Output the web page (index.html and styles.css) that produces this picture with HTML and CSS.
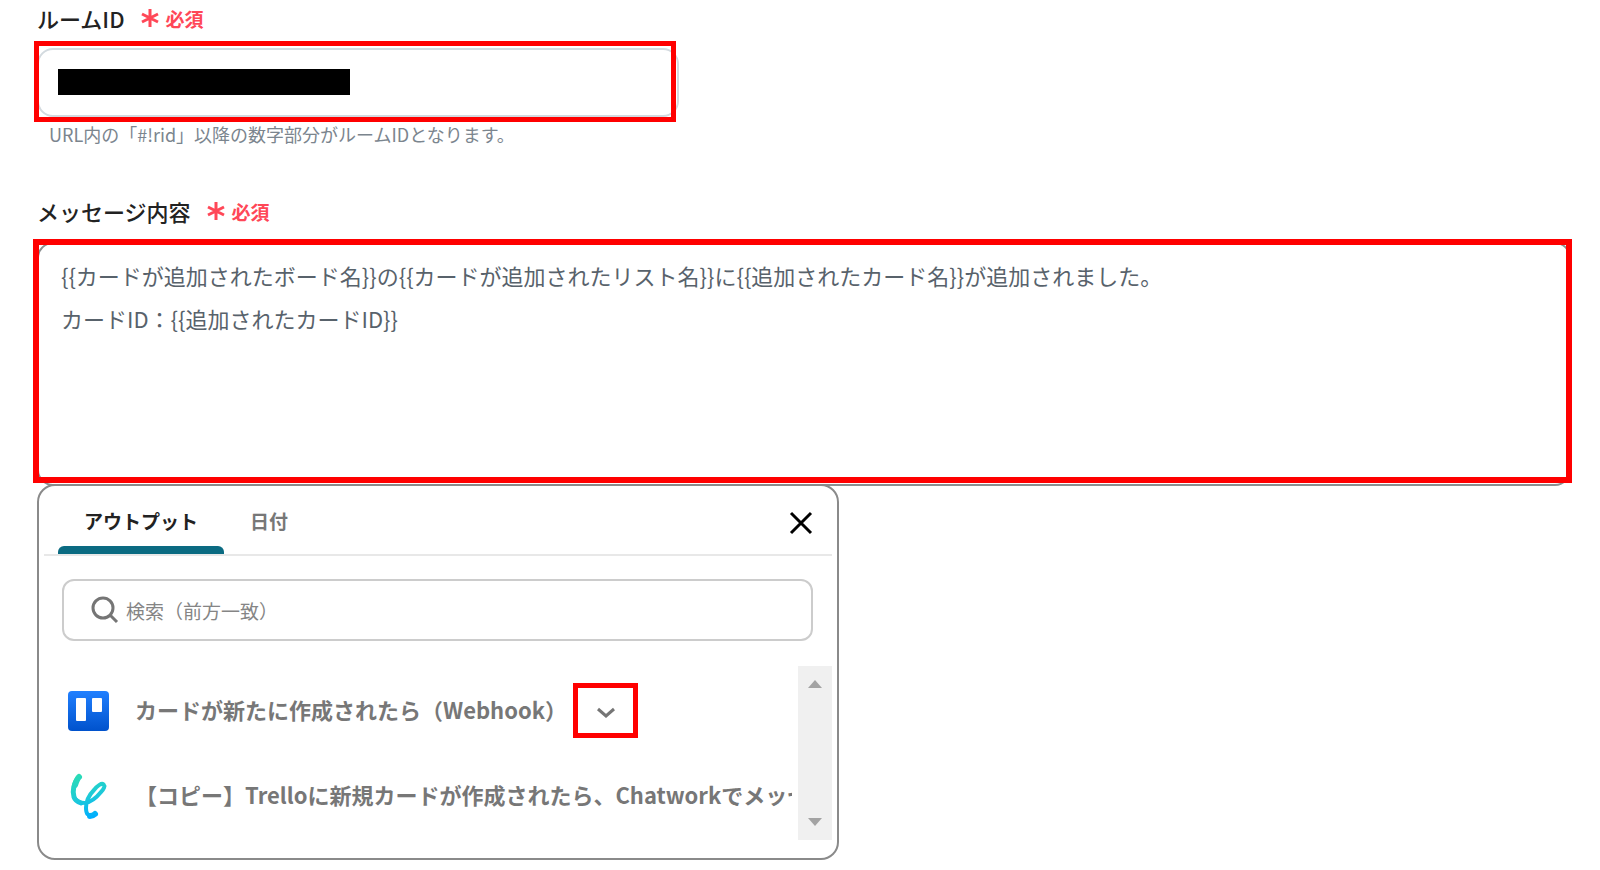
FILE: index.html
```html
<!DOCTYPE html>
<html lang="ja">
<head>
  <meta charset="UTF-8" />
  <meta name="viewport" content="width=device-width, initial-scale=1.0"/>
  <title>Chatwork - メッセージを送る</title>
  <link rel="stylesheet" href="styles.css">
</head>
<body>

  <form class="form">
    <div class="field">
      <div class="field-head">
        <label for="room-id">ルームID</label>
        <span class="required">
          <svg class="star" viewBox="0 0 18 18"><path d="M9 0v18M1 5l16 8M1 13l16-8"/></svg>
          必須
        </span>
      </div>
      <div class="input-box">
        <input type="text" id="room-id">
        <span class="redacted"></span>
        <span class="highlight"></span>
      </div>
      <p class="hint">URL内の「#!rid」以降の数字部分がルームIDとなります。</p>
    </div>

    <div class="field">
      <div class="field-head">
        <label for="message">メッセージ内容</label>
        <span class="required">
          <svg class="star" viewBox="0 0 18 18"><path d="M9 0v18M1 5l16 8M1 13l16-8"/></svg>
          必須
        </span>
      </div>
      <div class="message-box">
        <textarea id="message">{{カードが追加されたボード名}}の{{カードが追加されたリスト名}}に{{追加されたカード名}}が追加されました。
カードID：{{追加されたカードID}}</textarea>
        <span class="highlight"></span>
      </div>

      <div class="panel">
        <div class="tabs">
          <button type="button" class="tab active">アウトプット</button>
          <button type="button" class="tab">日付</button>
          <button type="button" class="close" aria-label="閉じる">
            <svg viewBox="0 0 24 24"><path d="M2 2l20 20M22 2L2 22"/></svg>
          </button>
        </div>

        <div class="search">
          <svg viewBox="0 0 28 28"><circle cx="12" cy="12" r="10"/><path d="M19 19l7 7"/></svg>
          <input type="text" placeholder="検索（前方一致）" aria-label="検索（前方一致）">
        </div>

        <div class="list-area">
          <ul class="list">
            <li>
              <svg class="app-icon" viewBox="0 0 44 48">
                <defs>
                  <linearGradient id="blue" x1="0" y1="0" x2="0" y2="1">
                    <stop offset="0" stop-color="#2180ff"/>
                    <stop offset="1" stop-color="#0052cc"/>
                  </linearGradient>
                </defs>
                <rect x="2" y="4" width="41" height="40" rx="4" fill="url(#blue)"/>
                <rect x="10" y="11" width="10" height="23" rx="1" fill="#fff"/>
                <rect x="26" y="11" width="10" height="14" rx="1" fill="#fff"/>
              </svg>
              <span class="item-name">カードが新たに作成されたら（Webhook）</span>
              <button type="button" class="toggle" aria-label="開く">
                <svg viewBox="0 0 20 12"><path d="M2 2l8 7 8-7"/></svg>
              </button>
            </li>
            <li>
              <svg class="app-icon" viewBox="0 0 44 48">
                <defs>
                  <linearGradient id="teal" gradientUnits="userSpaceOnUse" x1="12" y1="2" x2="26" y2="46">
                    <stop offset="0" stop-color="#2bdcb4"/>
                    <stop offset="0.55" stop-color="#1cc9da"/>
                    <stop offset="1" stop-color="#00adff"/>
                  </linearGradient>
                </defs>
                <g fill="none" stroke="url(#teal)" stroke-linecap="round" stroke-linejoin="round">
                  <path stroke-width="6" d="M13 5C11 7 10 10 9 13"/>
                  <path stroke-width="5" d="M12 6C8 11 6 19 8 25C9 28 12 30 15 31"/>
                  <path stroke-width="4" d="M8 25C10 30 14 31 19 31C25 30 31 25 35 20C38 17 39 14 38 13C36 10 31 14 28 18C23 23 20 29 20 36C20 42 22 44 26 43"/>
                  <path stroke-width="6" d="M24 44C26 44 27 44 29 42"/>
                </g>
              </svg>
              <span class="item-name">【コピー】Trelloに新規カードが作成されたら、Chatworkでメッセージを送る</span>
            </li>
          </ul>
          <div class="scrollbar">
            <svg viewBox="0 0 14 8"><path d="M0 8l7-8 7 8z"/></svg>
            <svg viewBox="0 0 14 8"><path d="M0 0l7 8 7-8z"/></svg>
          </div>
        </div>
      </div>
    </div>
  </form>

</body>
</html>
```
FILE: styles.css
```css
* {
  box-sizing: border-box;
}
body {
  margin: 0;
  background-color: #fff;
  font-family: "Noto Sans CJK JP", "Noto Sans", sans-serif;
  color: #222;
}
input,
textarea,
button {
  font-family: inherit;
}
.form {
  padding: 2px 29px 0 37px;
}
.field-head {
  display: flex;
  align-items: center;
  gap: 16px;
  height: 32px;
  font-size: 22px;
  font-weight: 500;
}
.required {
  display: flex;
  align-items: center;
  gap: 7px;
  font-size: 19px;
  font-weight: 700;
  color: #ff4757;
}
.star {
  width: 18px;
  height: 18px;
  fill: none;
  stroke: #ff4757;
  stroke-width: 3;
}

/* room id */
.input-box {
  position: relative;
  max-width: 642px;
  margin-top: 14px;
}
.input-box input {
  display: block;
  width: 100%;
  height: 69px;
  padding: 0 20px;
  border: 2px solid #d3dadf;
  border-radius: 16px;
  font-size: 22px;
}
.redacted {
  position: absolute;
  top: 21px;
  left: 21px;
  width: 292px;
  height: 26px;
  background-color: #000;
}
.highlight {
  position: absolute;
  border: 5px solid #f00;
  pointer-events: none;
}
.input-box .highlight {
  top: -7px;
  right: 3px;
  bottom: -5px;
  left: -3px;
}
.hint {
  margin: 4px 0 0 12px;
  font-size: 18px;
  line-height: 26px;
  color: #7b858e;
}

/* message */
.field + .field {
  margin-top: 48px;
}
.message-box {
  position: relative;
  margin-top: 15px;
}
.message-box textarea {
  display: block;
  width: 100%;
  height: 244px;
  padding: 10px 22px;
  border: 2px solid #8a8f90;
  border-radius: 16px;
  resize: none;
  overflow: hidden;
  font-size: 22px;
  line-height: 43px;
  color: #58626b;
}
.message-box .highlight {
  top: -3px;
  right: -1px;
  bottom: 3px;
  left: -4px;
  border-width: 6px;
}

/* output picker */
.panel {
  max-width: 802px;
  margin-top: -2px;
  position: relative;
  padding: 0 5px 18px;
  border: 2px solid #8a8a8a;
  border-radius: 18px;
  background-color: #fff;
}
.tabs {
  display: flex;
  height: 70px;
  padding: 0 14px;
  border-bottom: 2px solid #e8e8e8;
}
.tab {
  padding: 8px 26px 0;
  border: none;
  border-bottom: 8px solid transparent;
  background: none;
  font-size: 19px;
  font-weight: 700;
  color: #777;
  cursor: pointer;
}
.tab.active {
  position: relative;
  color: #222;
}
.tab.active::after {
  content: "";
  position: absolute;
  left: 0;
  right: 0;
  bottom: -8px;
  height: 8px;
  border-radius: 6px 6px 0 0;
  background-color: #0b6b82;
}
.close {
  margin-left: auto;
  padding: 6px 5px 0;
  border: none;
  background: none;
  cursor: pointer;
}
.close svg {
  display: block;
  width: 24px;
  height: 24px;
  fill: none;
  stroke: #000;
  stroke-width: 3;
}
.search {
  display: flex;
  align-items: center;
  gap: 7px;
  height: 62px;
  margin: 23px 19px 0 18px;
  padding: 0 27px;
  border: 2px solid #ccc;
  border-radius: 12px;
}
.search svg {
  width: 28px;
  height: 28px;
  fill: none;
  stroke: #757575;
  stroke-width: 3;
}
.search input {
  flex: 1;
  min-width: 0;
  padding: 0;
  border: none;
  outline: none;
  font-size: 19px;
}
.search input::placeholder {
  color: #858585;
}
.list-area {
  display: flex;
  gap: 6px;
  height: 174px;
  margin-top: 25px;
}
.list {
  flex: 1;
  min-width: 0;
  margin: 0;
  padding: 2px 0 0 22px;
  list-style: none;
  overflow: hidden;
}
.list li {
  display: flex;
  align-items: center;
  height: 85px;
}
.app-icon {
  flex-shrink: 0;
  width: 44px;
  height: 48px;
}
.item-name {
  margin-left: 25px;
  padding-bottom: 3px;
  overflow: hidden;
  white-space: nowrap;
  font-size: 22px;
  font-weight: 700;
  color: #777;
}
.toggle {
  flex-shrink: 0;
  display: flex;
  align-items: center;
  justify-content: center;
  width: 65px;
  height: 55px;
  margin-left: 6px;
  padding: 4px 0 0;
  border: 5px solid #f00;
  background: none;
  cursor: pointer;
}
.toggle svg {
  width: 20px;
  height: 12px;
  fill: none;
  stroke: #757575;
  stroke-width: 3;
}
.scrollbar {
  display: flex;
  flex-direction: column;
  align-items: center;
  justify-content: space-between;
  width: 34px;
  padding: 14px 0;
  background-color: #f0f0f0;
}
.scrollbar svg {
  width: 14px;
  height: 8px;
  fill: #a3a3a3;
}
```
